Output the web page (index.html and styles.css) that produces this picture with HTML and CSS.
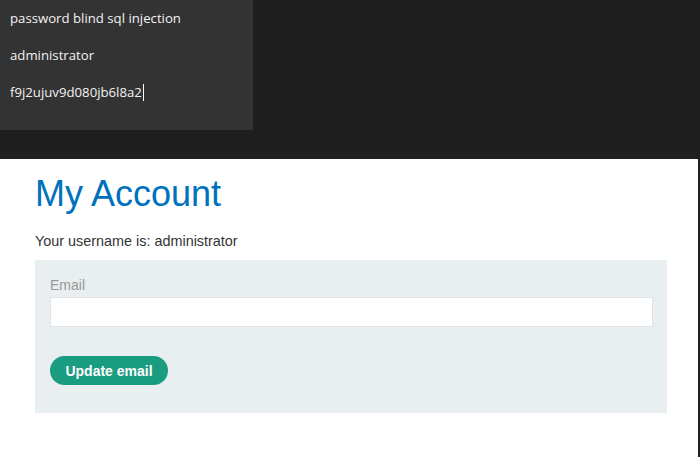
FILE: index.html
```html
<!DOCTYPE html>
<html>
<head>
<meta charset="utf-8">
<link rel="stylesheet" href="styles.css">
</head>
<body>
<div class="frame">
  <div class="topband">
    <div class="notes">
      <div class="note">password blind sql injection</div>
      <div class="note">administrator</div>
      <div class="note">f9j2ujuv9d080jb6l8a2<span class="caret"></span></div>
    </div>
  </div>
  <div class="page">
    <h1 class="title">My Account</h1>
    <p class="user">Your username is: administrator</p>
    <form class="card">
      <label class="label">Email</label>
      <input class="input" type="text">
      <button class="btn" type="button">Update email</button>
    </form>
  </div>
</div>
</body>
</html>
```
FILE: styles.css
```css
html, body { margin: 0; padding: 0; background: #1f1f1f; }
.frame { width: 698px; height: 457px; background: #fff; display: flex; flex-direction: column; }
.topband { height: 159px; background: #1f1f1f; flex: none; }
.notes { width: 253px; height: 130px; background: #333333; box-sizing: border-box; padding: 9px 0 0 10px; display: flex; flex-direction: column; gap: 18px; }
.note { font-family: "Open Sans", "Noto Sans", sans-serif; font-size: 13.2px; line-height: 19px; color: #f2f2f2; display: flex; align-items: center; }
.caret { display: inline-block; width: 1px; height: 17px; background: #fff; margin-left: 1px; }
.page { background: #fff; flex: 1; padding: 0 31px 0 35px; font-family: "Liberation Sans", Arial, sans-serif; }
.title { margin: 14px 0 0 0; font-weight: normal; font-size: 36px; line-height: 42px; color: #0071bc; }
.user { margin: 18px 0 0 0; font-size: 14.4px; line-height: 16px; color: #333332; }
.card { margin-top: 11px; background: #e9eef1; height: 153px; box-sizing: border-box; padding: 17px 14px 0 15px; display: flex; flex-direction: column; align-items: flex-start; }
.label { font-size: 14px; line-height: 17px; color: #999; }
.input { margin-top: 3px; width: 100%; height: 30px; box-sizing: border-box; border: 1px solid #dde3e6; background: #fff; outline: none; }
.btn { margin-top: 29px; height: 29px; width: 118px; border: none; border-radius: 15px; background: #1a9c80; color: #fff; font-family: "Liberation Sans", Arial, sans-serif; font-weight: bold; font-size: 14px; padding: 0; }
```
